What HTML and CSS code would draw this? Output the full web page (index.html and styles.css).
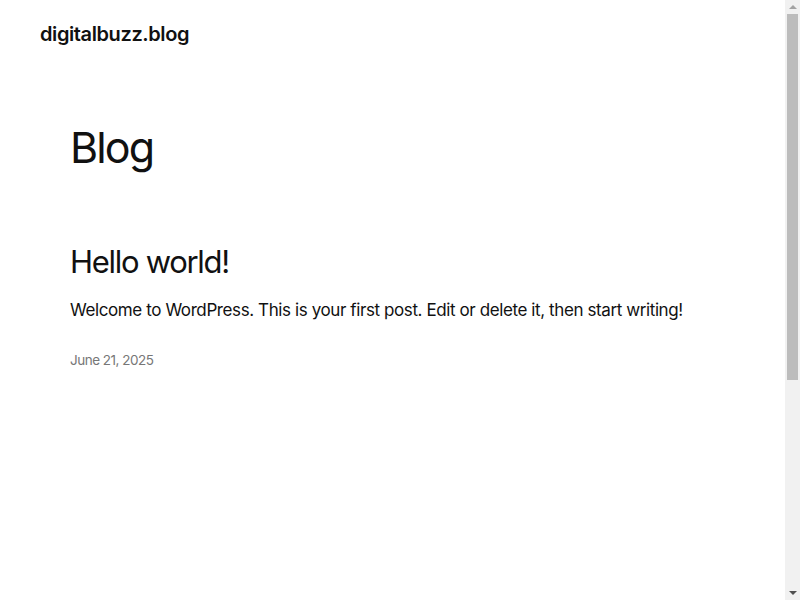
FILE: index.html
```html
<!DOCTYPE html>
<html lang="en">
<head>
<meta charset="utf-8">
<title>Blog – digitalbuzz.blog</title>
<link rel="stylesheet" href="styles.css">
</head>
<body>
<header class="site-header">
  <a class="site-title" href="#">digitalbuzz.blog</a>
</header>
<main class="site-main">
  <h1 class="page-title">Blog</h1>
  <article class="post">
    <h2 class="post-title">Hello world!</h2>
    <p class="post-excerpt">Welcome to WordPress. This is your first post. Edit or delete it, then start writing!</p>
    <div class="post-date">June 21, 2025</div>
  </article>
</main>
<footer class="site-footer"></footer>
<div class="scrollbar" aria-hidden="true">
  <div class="sb-button"><span class="sb-arrow-up"></span></div>
  <div class="sb-thumb"></div>
  <div class="sb-track"></div>
  <div class="sb-button"><span class="sb-arrow-down"></span></div>
</div>
</body>
</html>
```
FILE: styles.css
```css
html, body {
  margin: 0;
  padding: 0;
  background: #ffffff;
}
body {
  font-family: Inter, "Noto Sans", "Liberation Sans", sans-serif;
  color: #111111;
}
.site-header {
  padding: 20px 40px 0 40px;
  height: 40px;
}
.site-title {
  display: block;
  font-size: 20px;
  font-weight: 600;
  line-height: 28px;
  letter-spacing: -0.4px;
  color: #111111;
  text-decoration: none;
}
.site-main {
  padding: 0 70px;
  display: flex;
  flex-direction: column;
}
.page-title {
  margin: 61px 0 0 0;
  font-size: 43px;
  font-weight: 400;
  line-height: 52px;
  letter-spacing: -1.9px;
}
.post {
  margin-top: 69px;
  display: flex;
  flex-direction: column;
}
.post-title {
  margin: 0;
  font-size: 31px;
  font-weight: 400;
  line-height: 40px;
  letter-spacing: -1.3px;
}
.post-excerpt {
  margin: 15px 0 0 0;
  font-size: 17px;
  line-height: 26px;
  letter-spacing: -0.4px;
}
.post-date {
  margin-top: 27px;
  font-size: 13.5px;
  line-height: 20px;
  color: #777777;
  letter-spacing: -0.5px;
}
.site-footer {
  height: 560px;
}

/* classic scrollbar drawn over the right edge */
.scrollbar {
  position: fixed;
  top: 0;
  right: 0;
  width: 15px;
  height: 100vh;
  background: #f1f1f1;
  display: flex;
  flex-direction: column;
}
.sb-button {
  height: 14px;
  display: flex;
  align-items: center;
  justify-content: center;
}
.sb-arrow-up {
  width: 0;
  height: 0;
  border-left: 4px solid transparent;
  border-right: 4px solid transparent;
  border-bottom: 4px solid #a3a3a3;
}
.sb-arrow-down {
  width: 0;
  height: 0;
  border-left: 4px solid transparent;
  border-right: 4px solid transparent;
  border-top: 4px solid #505050;
}
.sb-thumb {
  height: 366px;
  margin: 0 2px;
  background: #bcbcbc;
}
.sb-track {
  flex: 1;
}
```
